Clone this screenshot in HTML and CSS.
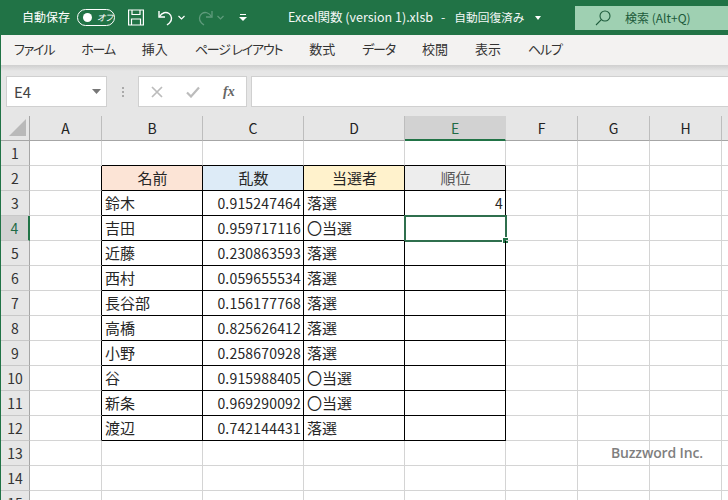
FILE: index.html
```html
<!DOCTYPE html>
<html lang="ja">
<head>
<meta charset="utf-8">
<title>Excel</title>
<link rel="stylesheet" href="styles.css">
</head>
<body>
<div class="app">
  <header class="titlebar">
    <span class="autosave">自動保存</span>
    <span class="toggle"><i class="knob"></i><em>オフ</em></span>
    <svg class="ico save" width="16" height="17" viewBox="0 0 16 17" fill="none" stroke="#fff" stroke-width="1.2"><path d="M.6 1h14.800v15H.6z"/><path d="M4 1v4.500h8V1M3.500 16v-6h9v6"/></svg>
    <svg class="ico undo" width="17" height="17" viewBox="0 0 17 17" fill="none" stroke="#fff" stroke-width="1.4"><path d="M2 2v6h6"/><path d="M2.5 7.5C5 3.5 9 2.5 12 4.500s3.500 7 .5 9.500L10 16"/></svg>
    <svg class="ico chev1" width="7" height="5" viewBox="0 0 7 5" fill="none" stroke="#fff" stroke-width="1.2"><path d="M.5 1 3.500 4 6.500 1"/></svg>
    <svg class="ico redo" width="17" height="17" viewBox="0 0 17 17" fill="none" stroke="#5f9b7c" stroke-width="1.3"><path d="M15 2v6H9"/><path d="M14.500 7.500C12 3.500 8 2.500 5 4.500s-3.500 7-.5 9.500L7 16"/></svg>
    <svg class="ico chev2" width="7" height="5" viewBox="0 0 7 5" fill="none" stroke="#5f9b7c" stroke-width="1.2"><path d="M.5 1 3.500 4 6.500 1"/></svg>
    <svg class="ico more" width="8" height="7" viewBox="0 0 8 7" fill="#fff"><path d="M1 0h6v1H1zM0 3h8L4 7z"/></svg>
    <span class="doc">Excel関数 (version 1).xlsb<span class="sep">-</span><span class="state">自動回復済み</span></span>
    <svg class="ico docarrow" width="6" height="4" viewBox="0 0 6 4" fill="#fff"><path d="M0 0h6L3 4z"/></svg>
    <div class="search">
      <svg width="16" height="16" viewBox="0 0 16 16" fill="none" stroke="#1f5c3d" stroke-width="1.1"><circle cx="10" cy="6" r="5"/><path d="M6.300 9.700 1 15"/></svg>
      <span>検索 (Alt+Q)</span>
    </div>
  </header>
  <nav class="ribbon">
    <span class="kana">ファイル</span><span class="kana">ホーム</span><span>挿入</span><span class="kana">ページ レイアウト</span><span>数式</span><span class="kana">データ</span><span>校閲</span><span>表示</span><span class="kana">ヘルプ</span>
  </nav>
  <div class="formula">
    <div class="namebox"><span>E4</span><svg width="9" height="5" viewBox="0 0 9 5" fill="#777"><path d="M0 0h9L4.500 5z"/></svg></div>
    <div class="grip"><i></i><i></i><i></i></div>
    <div class="fbtns">
      <svg width="12" height="12" viewBox="0 0 12 12" fill="none" stroke="#bcbcbc" stroke-width="1.700"><path d="M1 1l10 10M11 1 1 11"/></svg>
      <svg width="14" height="12" viewBox="0 0 14 12" fill="none" stroke="#bcbcbc" stroke-width="2.200"><path d="M1 6.500 5 10.500 13 1.500"/></svg>
      <span class="fx">fx</span>
    </div>
    <div class="finput"></div>
  </div>
  <div class="sheet">
    <div class="corner"><svg width="17" height="17" viewBox="0 0 17 17" fill="#b9b9b9"><path d="M17 0v17H0z"/></svg></div>
    <div class="ch">A</div><div class="ch">B</div><div class="ch">C</div><div class="ch">D</div><div class="ch on">E</div><div class="ch">F</div><div class="ch">G</div><div class="ch">H</div><div class="ch"></div>

    <div class="rh">1</div><div class="c"></div><div class="c t"></div><div class="c t"></div><div class="c t"></div><div class="c t"></div><div class="c"></div><div class="c"></div><div class="c"></div><div class="c"></div>

    <div class="rh">2</div><div class="c l"></div><div class="c d h name">名前</div><div class="c d h rand">乱数</div><div class="c d h win">当選者</div><div class="c d h rank">順位</div><div class="c"></div><div class="c"></div><div class="c"></div><div class="c"></div>

    <div class="rh">3</div><div class="c l"></div><div class="c d">鈴木</div><div class="c d n">0.915247464</div><div class="c d">落選</div><div class="c d n">4</div><div class="c"></div><div class="c"></div><div class="c"></div><div class="c"></div>

    <div class="rh on">4</div><div class="c l"></div><div class="c d">吉田</div><div class="c d n">0.959717116</div><div class="c d">〇当選</div><div class="c d cur"><i class="sel"><b></b></i></div><div class="c"></div><div class="c"></div><div class="c"></div><div class="c"></div>

    <div class="rh">5</div><div class="c l"></div><div class="c d">近藤</div><div class="c d n">0.230863593</div><div class="c d">落選</div><div class="c d n"></div><div class="c"></div><div class="c"></div><div class="c"></div><div class="c"></div>

    <div class="rh">6</div><div class="c l"></div><div class="c d">西村</div><div class="c d n">0.059655534</div><div class="c d">落選</div><div class="c d n"></div><div class="c"></div><div class="c"></div><div class="c"></div><div class="c"></div>

    <div class="rh">7</div><div class="c l"></div><div class="c d">長谷部</div><div class="c d n">0.156177768</div><div class="c d">落選</div><div class="c d n"></div><div class="c"></div><div class="c"></div><div class="c"></div><div class="c"></div>

    <div class="rh">8</div><div class="c l"></div><div class="c d">高橋</div><div class="c d n">0.825626412</div><div class="c d">落選</div><div class="c d n"></div><div class="c"></div><div class="c"></div><div class="c"></div><div class="c"></div>

    <div class="rh">9</div><div class="c l"></div><div class="c d">小野</div><div class="c d n">0.258670928</div><div class="c d">落選</div><div class="c d n"></div><div class="c"></div><div class="c"></div><div class="c"></div><div class="c"></div>

    <div class="rh">10</div><div class="c l"></div><div class="c d">谷</div><div class="c d n">0.915988405</div><div class="c d">〇当選</div><div class="c d n"></div><div class="c"></div><div class="c"></div><div class="c"></div><div class="c"></div>

    <div class="rh">11</div><div class="c l"></div><div class="c d">新条</div><div class="c d n">0.969290092</div><div class="c d">〇当選</div><div class="c d n"></div><div class="c"></div><div class="c"></div><div class="c"></div><div class="c"></div>

    <div class="rh">12</div><div class="c l"></div><div class="c d">渡辺</div><div class="c d n">0.742144431</div><div class="c d">落選</div><div class="c d n"></div><div class="c"></div><div class="c"></div><div class="c"></div><div class="c"></div>

    <div class="rh">13</div><div class="c"></div><div class="c"></div><div class="c"></div><div class="c"></div><div class="c"></div><div class="c"></div><div class="c"></div><div class="c"></div><div class="c"></div>

    <div class="rh">14</div><div class="c"></div><div class="c"></div><div class="c"></div><div class="c"></div><div class="c"></div><div class="c"></div><div class="c"></div><div class="c"></div><div class="c"></div>

    <div class="rh">15</div><div class="c"></div><div class="c"></div><div class="c"></div><div class="c"></div><div class="c"></div><div class="c"></div><div class="c"></div><div class="c"></div><div class="c"></div>

    <span class="mark">Buzzword Inc.</span>
  </div>
</div>
</body>
</html>
```
FILE: styles.css
```css
* { box-sizing: border-box; }
html, body { margin: 0; padding: 0; }
body {
  width: 728px;
  height: 500px;
  overflow: hidden;
  background: #217346;
  font-family: "Noto Sans CJK JP", "Noto Sans", sans-serif;
  color: #222;
}
.app {
  margin-left: 1px;
  height: 500px;
  display: flex;
  flex-direction: column;
  overflow: hidden;
}
.titlebar {
  height: 35px;
  margin-left: -1px;
  background: #217346;
  display: flex;
  align-items: center;
  color: #fff;
  font-size: 12.500px;
  flex: none;
}
.ico { flex: none; }
.autosave { margin: -2px 0 0 22px; width: 48px; font-size: 12px; white-space: nowrap; }
.toggle {
  margin-left: 7px;
  width: 38px;
  height: 17px;
  border: 1.200px solid #fff;
  border-radius: 9px;
  display: flex;
  align-items: center;
  padding-left: 5px;
}
.knob { width: 9px; height: 9px; border-radius: 50%; background: #fff; }
.toggle em { font-size: 9px; margin-left: 5px; font-style: italic; font-feature-settings: "palt"; line-height: 1; white-space: nowrap; }
.save { margin-left: 13px; }
.undo { margin-left: 13px; }
.chev1 { margin-left: 4px; }
.redo { margin-left: 12px; }
.chev2 { margin-left: 3px; }
.more { margin-left: 15px; }
.doc { margin: -2px 0 0 41px; width: 239px; white-space: nowrap; font-size: 12.500px; color: #f4f8f6; }
.sep { margin: 0 9px 0 8px; }
.state { font-size: 11.700px; }
.docarrow { margin-left: 8px; }
.search {
  margin-left: 34px;
  width: 153px;
  height: 24px;
  background: #9fd0b2;
  display: flex;
  align-items: center;
  color: #1c5a3a;
  font-size: 12px;
  padding-left: 20px;
  gap: 14px;
  flex: none;
}
.ribbon {
  height: 30px;
  background: #f3f2f1;
  display: flex;
  align-items: center;
  gap: 27px;
  padding: 0 0 4px 13px;
  font-size: 13px;
  font-feature-settings: "palt";
  color: #333;
  flex: none;
}
.ribbon span { white-space: nowrap; }
.ribbon .kana { letter-spacing: -1.200px; }
.formula {
  height: 52px;
  background: linear-gradient(#cfcfcf 0, #e6e6e6 6px);
  padding: 11px 0 10px 5px;
  display: flex;
  flex: none;
}
.namebox {
  width: 101px;
  height: 31px;
  background: #fff;
  border: 1px solid #d0d0d0;
  display: flex;
  align-items: center;
  justify-content: space-between;
  padding: 0 5px 0 7px;
  font-size: 15px;
  color: #444;
}
.grip { width: 31px; display: flex; flex-direction: column; align-items: center; justify-content: center; gap: 2px; height: 31px; }
.grip i { width: 2px; height: 2px; background: #aaa; }
.fbtns {
  width: 109px;
  height: 31px;
  background: #fff;
  border: 1px solid #d0d0d0;
  display: flex;
  align-items: center;
  padding-left: 12px;
  gap: 23px;
}
.fx { font: italic bold 14px "Liberation Serif", serif; color: #666; }
.finput {
  margin-left: 4px;
  flex: 1;
  height: 31px;
  background: #fff;
  border: 1px solid #d0d0d0;
  border-right: 0;
}
.sheet {
  position: relative;
  display: grid;
  grid-template-columns: 29px 72px repeat(4, 101px) 72px 72px 72px 30px;
  grid-template-rows: 25px repeat(15, 25px);
  background: #fff;
  font-size: 14px;
  margin-top: -1px;
  flex: none;
}
.corner {
  background: #e6e6e6;
  border-right: 1px solid #a6a6a6;
  border-bottom: 1px solid #a6a6a6;
  padding: 3px 0 0 8px;
  line-height: 0;
}
.ch {
  background: #e6e6e6;
  border-right: 1px solid #bdbdbd;
  border-bottom: 1px solid #a6a6a6;
  display: flex;
  align-items: center;
  justify-content: center;
  color: #222;
}
.ch.on { background: #d2d2d2; color: #1f6b45; border-bottom: 2px solid #217346; border-right-color: #d2d2d2; }
.rh {
  background: #e6e6e6;
  border-right: 1px solid #a6a6a6;
  border-bottom: 1px solid #c8c8c8;
  display: flex;
  align-items: center;
  justify-content: center;
  color: #333;
}
.rh.on { background: #d2d2d2; color: #1f6b45; border-right: 2px solid #217346; }
.c {
  border-right: 1px solid #d4d4d4;
  border-bottom: 1px solid #d4d4d4;
  display: flex;
  align-items: center;
  padding: 0 2px 2px 3px;
  white-space: nowrap;
  font-size: 15px;
  color: #262626;
  position: relative;
}
.c.t { border-bottom-color: #000; }
.c.l { border-right-color: #000; }
.c.d { border-right-color: #000; border-bottom-color: #000; }
.c.n { justify-content: flex-end; font-size: 14px; letter-spacing: 0.180px; padding-bottom: 0; }
.c.h { justify-content: center; }
.name { background: #fce4d6; }
.rand { background: #ddebf7; }
.win { background: #fff2cc; }
.rank { background: #ededed; color: #555; }
.sel {
  position: absolute;
  left: -1px;
  right: -2px;
  top: -1px;
  bottom: -2px;
  border: 2px solid #2f6f4e;
}
.sel b {
  position: absolute;
  right: -3px;
  bottom: -3px;
  width: 5px;
  height: 5px;
  background: #217346;
  outline: 1px solid #fff;
}
.mark {
  position: absolute;
  left: 610px;
  top: 327px;
  font: 600 14px "Open Sans", sans-serif;
  letter-spacing: -0.150px;
  color: #7f7f7f;
  white-space: nowrap;
}
```
